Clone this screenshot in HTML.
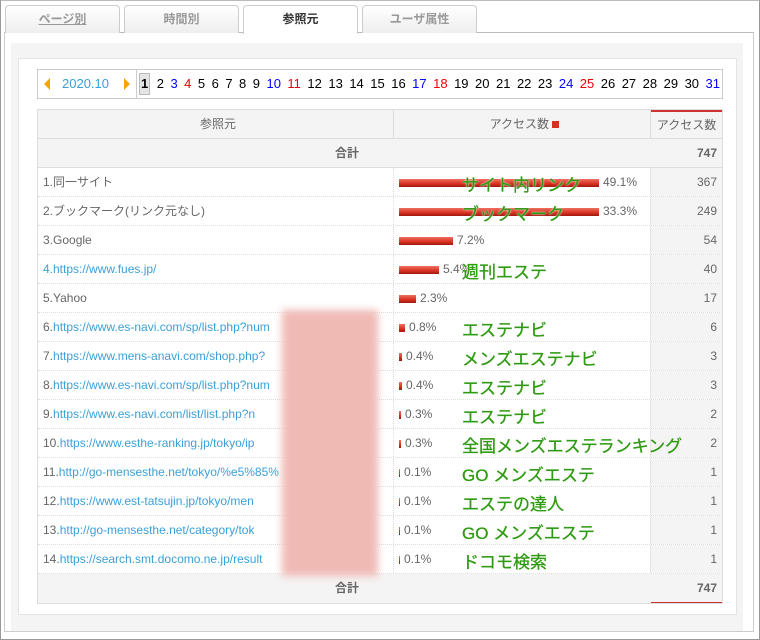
<!DOCTYPE html><html><head><meta charset="utf-8"><style>
*{box-sizing:border-box;margin:0;padding:0}
body{width:760px;height:640px;background:#fff;font-family:"Liberation Sans","Noto Sans CJK JP",sans-serif;font-size:12px;color:#666;position:relative;overflow:hidden}
.frame{position:absolute;left:0;top:0;width:760px;height:640px;border:1px solid #999;border-top-color:#bbb}
.tab{position:absolute;top:5px;height:28px;width:115px;border:1px solid #ccc;border-bottom:none;border-radius:4px 4px 0 0;background:linear-gradient(#fff,#eee);text-align:center;line-height:27px;font-size:12px;color:#999;font-weight:bold}
.tab.on{background:#fff;color:#333;height:29px;z-index:2}
.panel{position:absolute;left:4px;top:32px;width:750px;height:600px;border:1px solid #ccc;border-top-color:#bbb}
.gray{position:absolute;left:11px;top:43px;width:732px;height:588px;background:#f4f4f4}
.inner{position:absolute;left:18px;top:58px;width:719px;height:557px;background:#fff;border:1px solid #e4e4e4}
.date{position:absolute;left:37px;top:69px;width:686px;height:30px;border:1px solid #ccc;font-size:13px;line-height:28px}
.date .ym{position:absolute;left:0;top:0;width:99px;height:28px;border-right:1px solid #ccc;color:#3aa0d8}
.date .ym span{position:absolute;left:24px}
.tl{position:absolute;left:6px;top:8px;border-right:6px solid #f5a500;border-top:6px solid transparent;border-bottom:6px solid transparent}
.tr{position:absolute;left:86px;top:8px;border-left:6px solid #f5a500;border-top:6px solid transparent;border-bottom:6px solid transparent}
.days{position:absolute;left:101px;top:0;width:581px;display:flex;justify-content:space-between;color:#000}
.days b{font-weight:normal}
.d1{background:#e4e4e4;border:1px solid #bbb;padding:0 1px;line-height:20px;height:22px;margin-top:3px;font-weight:bold!important}
.bl{color:#00f}.rd{color:#e00}
.tbl{position:absolute;left:37px;top:109px;width:686px;border:1px solid #ddd}
.row{position:relative;height:29px;border-bottom:1px dotted #ddd;line-height:28px}
.c1{position:absolute;left:0;width:356px;height:100%;padding-left:5px;white-space:nowrap;overflow:hidden;border-right:1px dotted #ddd}
.c2{position:absolute;left:356px;width:257px;height:100%;padding-left:5px;border-right:1px solid #e4e4e4}
.c3{position:absolute;left:613px;width:71px;height:100%;background:#f4f4f4;text-align:right;padding-right:5px}
.hd{background:#f4f4f4;border-bottom:1px solid #ddd}
.hd .c1,.hd .c2{text-align:center;border-right:1px solid #ddd}
.tot{background:#f4f4f4;font-weight:bold;border-bottom:1px solid #ddd}
.tot .c1{text-align:center;width:613px;border:none}
a{color:#3aa0d8;text-decoration:none}
.bar{display:inline-block;height:8px;vertical-align:middle;background:linear-gradient(#f07060,#d83020 60%,#a01810);margin-right:4px}
.g{position:absolute;left:462px;font-size:17px;color:#2f9a12;z-index:5;white-space:nowrap;text-shadow:0 0 2px #fff,0 0 1px #fff;-webkit-text-stroke:0.3px #2f9a12}
.blur{position:absolute;left:282px;top:310px;width:96px;height:266px;background:#f0bab4;filter:blur(4px);z-index:4}
</style></head><body>
<div class="frame"></div>
<div class="panel"></div>
<div class="tab" style="left:5px;text-decoration:underline">ページ別</div>
<div class="tab" style="left:124px">時間別</div>
<div class="tab on" style="left:243px">参照元</div>
<div class="tab" style="left:362px">ユーザ属性</div>
<div class="gray"></div><div class="inner"></div>
<div class="date"><div class="ym"><i class="tl"></i><span>2020.10</span><i class="tr"></i></div>
<div class="days"><b class="d1">1</b><b>2</b><b class="bl">3</b><b class="rd">4</b><b>5</b><b>6</b><b>7</b><b>8</b><b>9</b><b class="bl">10</b><b class="rd">11</b><b>12</b><b>13</b><b>14</b><b>15</b><b>16</b><b class="bl">17</b><b class="rd">18</b><b>19</b><b>20</b><b>21</b><b>22</b><b>23</b><b class="bl">24</b><b class="rd">25</b><b>26</b><b>27</b><b>28</b><b>29</b><b>30</b><b class="bl">31</b></div></div>
<div class="tbl">
<div class="row hd"><div class="c1">参照元</div><div class="c2">アクセス数 <span style="display:inline-block;width:7px;height:7px;background:#d83020"></span></div><div class="c3" style="border-top:2px solid #c33;text-align:center;padding:0;line-height:26px">アクセス数</div></div>
<div class="row tot"><div class="c1">合計</div><div class="c3">747</div></div>
<div class="row"><div class="c1">1.同一サイト</div><div class="c2"><span class="bar" style="width:200px"></span>49.1%</div><div class="c3">367</div></div>
<div class="row"><div class="c1">2.ブックマーク(リンク元なし)</div><div class="c2"><span class="bar" style="width:200px"></span>33.3%</div><div class="c3">249</div></div>
<div class="row"><div class="c1">3.Google</div><div class="c2"><span class="bar" style="width:54px"></span>7.2%</div><div class="c3">54</div></div>
<div class="row"><div class="c1"><a>4.https://www.fues.jp/</a></div><div class="c2"><span class="bar" style="width:40px"></span>5.4%</div><div class="c3">40</div></div>
<div class="row"><div class="c1">5.Yahoo</div><div class="c2"><span class="bar" style="width:17px"></span>2.3%</div><div class="c3">17</div></div>
<div class="row"><div class="c1">6.<a>https://www.es-navi.com/sp/list.php?num</a></div><div class="c2"><span class="bar" style="width:6px"></span>0.8%</div><div class="c3">6</div></div>
<div class="row"><div class="c1">7.<a>https://www.mens-anavi.com/shop.php?</a></div><div class="c2"><span class="bar" style="width:3px"></span>0.4%</div><div class="c3">3</div></div>
<div class="row"><div class="c1">8.<a>https://www.es-navi.com/sp/list.php?num</a></div><div class="c2"><span class="bar" style="width:3px"></span>0.4%</div><div class="c3">3</div></div>
<div class="row"><div class="c1">9.<a>https://www.es-navi.com/list/list.php?n</a></div><div class="c2"><span class="bar" style="width:2px"></span>0.3%</div><div class="c3">2</div></div>
<div class="row"><div class="c1">10.<a>https://www.esthe-ranking.jp/tokyo/ip</a></div><div class="c2"><span class="bar" style="width:2px"></span>0.3%</div><div class="c3">2</div></div>
<div class="row"><div class="c1">11.<a>http://go-mensesthe.net/tokyo/%e5%85%</a></div><div class="c2"><span class="bar" style="width:1px"></span>0.1%</div><div class="c3">1</div></div>
<div class="row"><div class="c1">12.<a>https://www.est-tatsujin.jp/tokyo/men</a></div><div class="c2"><span class="bar" style="width:1px"></span>0.1%</div><div class="c3">1</div></div>
<div class="row"><div class="c1">13.<a>http://go-mensesthe.net/category/tok</a></div><div class="c2"><span class="bar" style="width:1px"></span>0.1%</div><div class="c3">1</div></div>
<div class="row"><div class="c1">14.<a>https://search.smt.docomo.ne.jp/result</a></div><div class="c2"><span class="bar" style="width:1px"></span>0.1%</div><div class="c3">1</div></div>
<div class="row tot" style="border-bottom:none"><div class="c1">合計</div><div class="c3" style="border-bottom:1px solid #c33">747</div></div>
</div>
<div class="blur"></div>
<div class="g" style="top:171px">サイト内リンク</div>
<div class="g" style="top:200px">ブックマーク</div>
<div class="g" style="top:258px">週刊エステ</div>
<div class="g" style="top:316px">エステナビ</div>
<div class="g" style="top:345px">メンズエステナビ</div>
<div class="g" style="top:374px">エステナビ</div>
<div class="g" style="top:403px">エステナビ</div>
<div class="g" style="top:432px">全国メンズエステランキング</div>
<div class="g" style="top:461px">GO メンズエステ</div>
<div class="g" style="top:490px">エステの達人</div>
<div class="g" style="top:519px">GO メンズエステ</div>
<div class="g" style="top:548px">ドコモ検索</div>
</body></html>
